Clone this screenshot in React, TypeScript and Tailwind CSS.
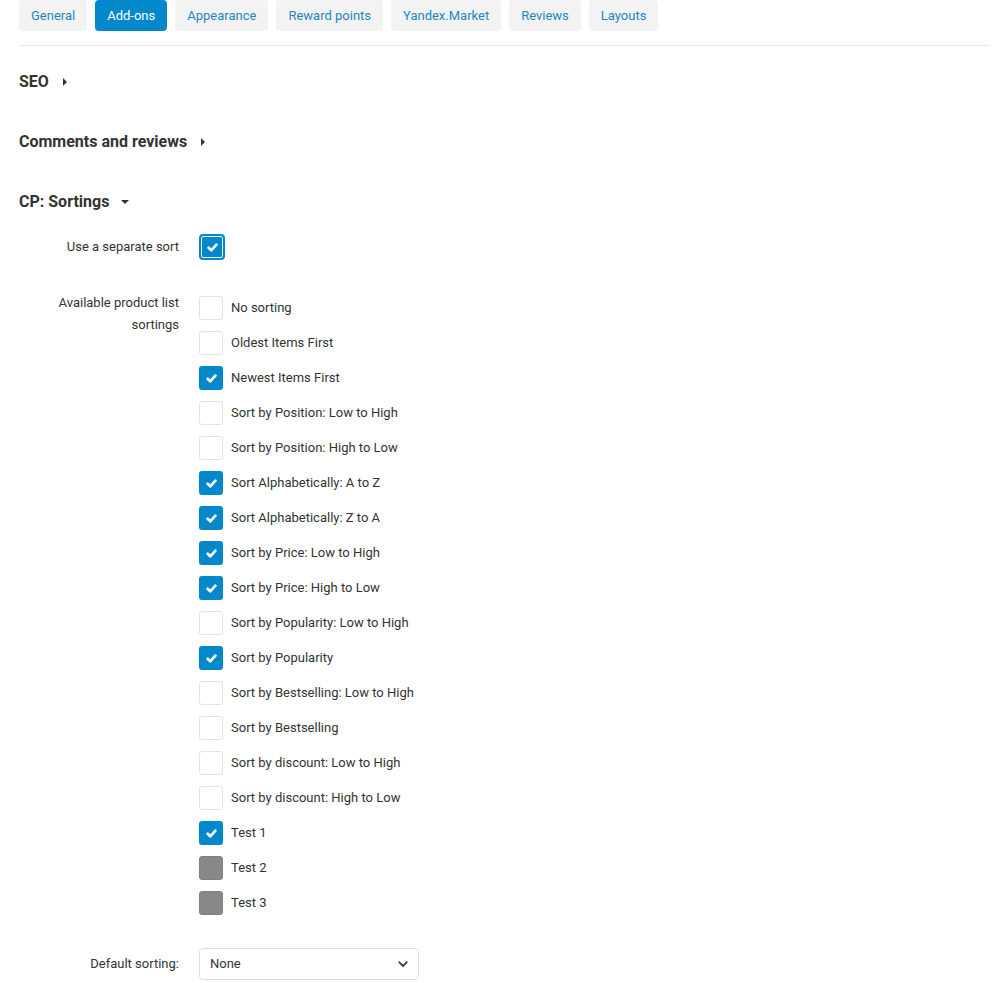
import React from "react";

// Datos
const tabs = [
  "General",
  "Add-ons",
  "Appearance",
  "Reward points",
  "Yandex.Market",
  "Reviews",
  "Layouts",
];

type Sorting = { label: string; state: "off" | "on" | "disabled" };

const sortings: Sorting[] = [
  { label: "No sorting", state: "off" },
  { label: "Oldest Items First", state: "off" },
  { label: "Newest Items First", state: "on" },
  { label: "Sort by Position: Low to High", state: "off" },
  { label: "Sort by Position: High to Low", state: "off" },
  { label: "Sort Alphabetically: A to Z", state: "on" },
  { label: "Sort Alphabetically: Z to A", state: "on" },
  { label: "Sort by Price: Low to High", state: "on" },
  { label: "Sort by Price: High to Low", state: "on" },
  { label: "Sort by Popularity: Low to High", state: "off" },
  { label: "Sort by Popularity", state: "on" },
  { label: "Sort by Bestselling: Low to High", state: "off" },
  { label: "Sort by Bestselling", state: "off" },
  { label: "Sort by discount: Low to High", state: "off" },
  { label: "Sort by discount: High to Low", state: "off" },
  { label: "Test 1", state: "on" },
  { label: "Test 2", state: "disabled" },
  { label: "Test 3", state: "disabled" },
];

// -------------------

const Check = () => (
  <svg width="11" height="9" viewBox="0 0 11 9" fill="none">
    <path
      d="M1.6 4.8 L4.3 7.3 L9.4 1.7"
      stroke="white"
      strokeWidth="2.7"
      strokeLinecap="round"
      strokeLinejoin="round"
    />
  </svg>
);

const Checkbox = ({ state }: { state: Sorting["state"] }) => {
  if (state === "on") {
    return (
      <span className="flex items-center justify-center w-6 h-6 rounded-[3px] bg-[#0388cc]">
        <Check />
      </span>
    );
  }
  if (state === "disabled") {
    return (
      <span className="block w-6 h-6 rounded-[3px] bg-[#888888] border border-[#808080]" />
    );
  }
  return (
    <span className="block w-6 h-6 rounded-[3px] bg-white border border-[#e3e3e3]" />
  );
};

const SectionTitle = ({ title, open }: { title: string; open?: boolean }) => (
  <div className="flex items-center h-5 text-[16px] font-bold text-[#333]">
    <span>{title}</span>
    {open ? (
      <span className="ml-[12px] w-0 h-0 border-l-[4px] border-r-[4px] border-t-[4px] border-l-transparent border-r-transparent border-t-[#333]" />
    ) : (
      <span className="ml-[14px] w-0 h-0 border-t-[4px] border-b-[4px] border-l-[4px] border-t-transparent border-b-transparent border-l-[#333]" />
    )}
  </div>
);

const App = () => {
  return (
    <div
      className="min-h-screen bg-white text-[#333] pl-[19px] pr-[16px]"
      style={{ fontFamily: "Roboto, 'Liberation Sans', sans-serif" }}
    >
      <div className="flex gap-2">
        {tabs.map((tab) => (
          <div
            key={tab}
            className={
              tab === "Add-ons"
                ? "flex items-center h-[31px] px-3 rounded-[4px] bg-[#0388cc] text-white text-[13px]"
                : "flex items-center h-[31px] px-3 rounded-[4px] bg-[#f3f3f3] text-[#1f86c4] text-[13px]"
            }
          >
            {tab}
          </div>
        ))}
      </div>
      <div className="mt-[14px] border-t border-[#e6e6ee]" />

      <div className="mt-[26px] flex flex-col gap-10">
        <SectionTitle title="SEO" />
        <SectionTitle title="Comments and reviews" />
        <SectionTitle title="CP: Sortings" open />
      </div>

      <div className="mt-[22px] flex flex-col text-[13px]">
        <div className="flex items-center">
          <label className="w-[160px] text-right">Use a separate sort</label>
          <span className="ml-5 flex items-center justify-center w-[26px] h-[26px] rounded-[4px] bg-[#0388cc] border-2 border-[#0388cc] shadow-[inset_0_0_0_1px_white]">
            <Check />
          </span>
        </div>

        <div className="flex mt-[32px]">
          <label className="w-[160px] text-right leading-[22px]">
            Available product list sortings
          </label>
          <div className="ml-5 pt-1 flex flex-col gap-[11px]">
            {sortings.map((s) => (
              <div key={s.label} className="flex items-center gap-2">
                <Checkbox state={s.state} />
                <span>{s.label}</span>
              </div>
            ))}
          </div>
        </div>

        <div className="flex items-center mt-[33px]">
          <label className="w-[160px] text-right">Default sorting:</label>
          <div className="ml-5 flex items-center justify-between w-[220px] h-[32px] px-[10px] border border-[#dcdfe6] rounded-[4px]">
            <span>None</span>
            <svg width="10" height="7" viewBox="0 0 10 7" fill="none">
              <path
                d="M1.2 1.2 L5 5 L8.8 1.2"
                stroke="#444"
                strokeWidth="1.8"
                strokeLinecap="round"
                strokeLinejoin="round"
              />
            </svg>
          </div>
        </div>
      </div>
    </div>
  );
};

export default App;
